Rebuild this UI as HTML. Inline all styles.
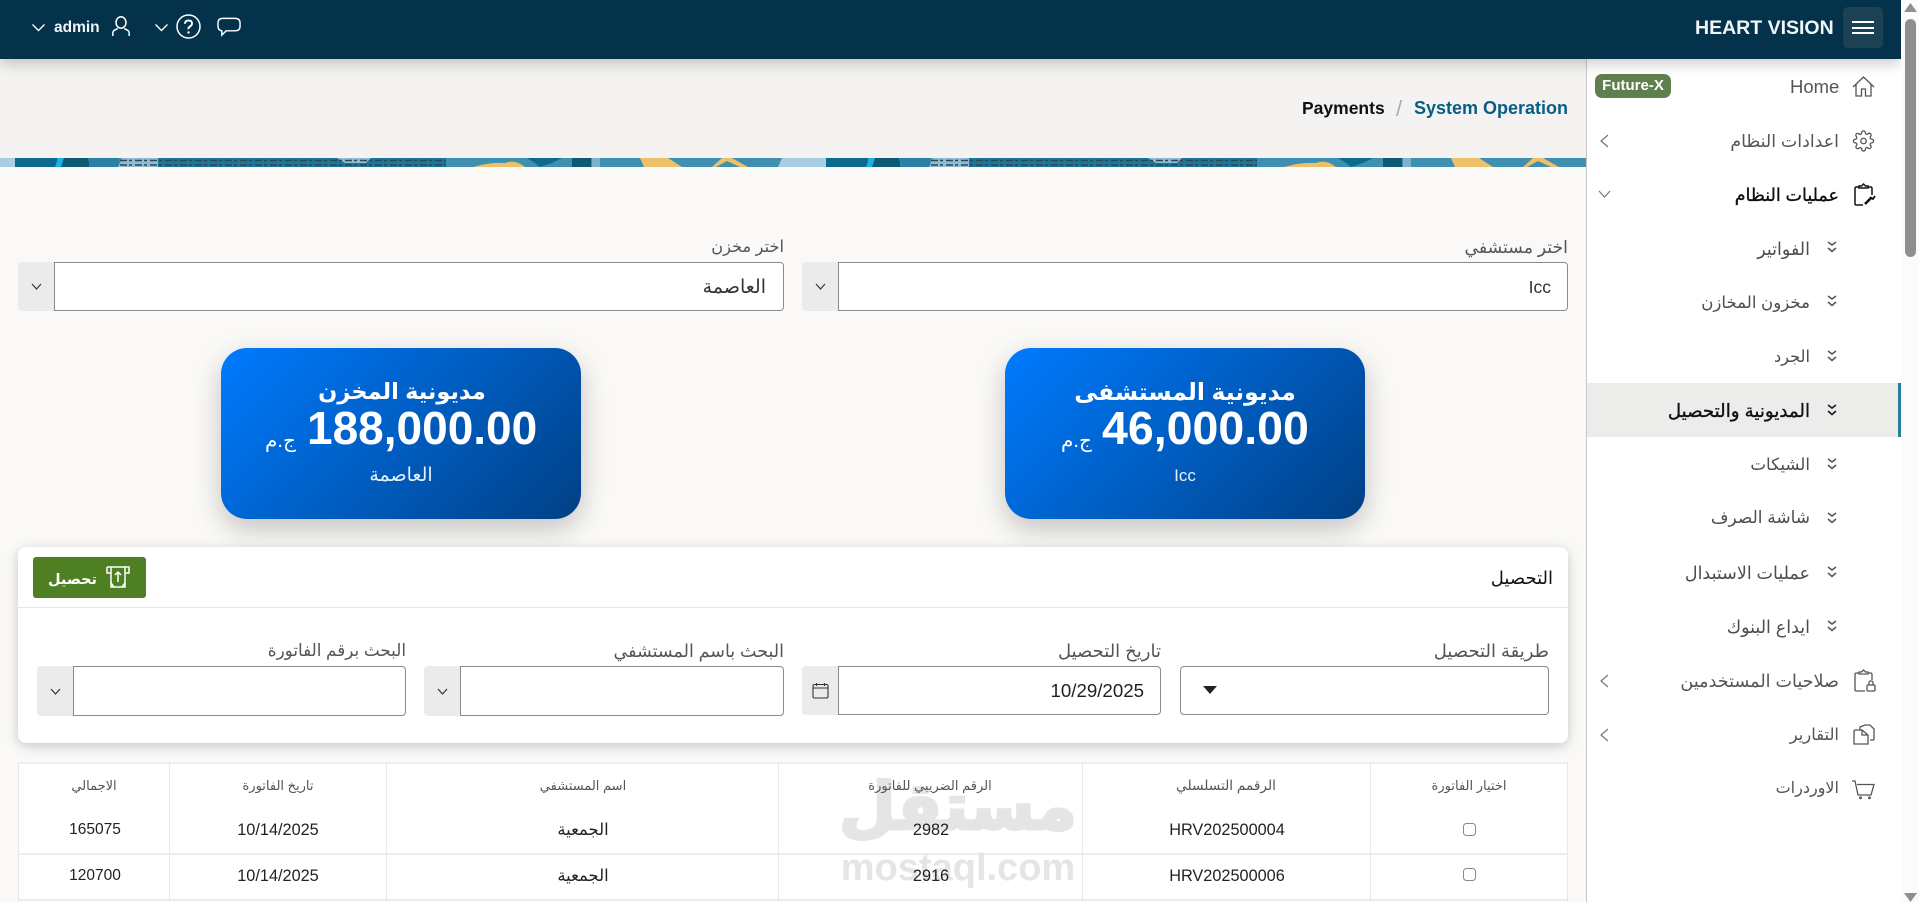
<!DOCTYPE html>
<html lang="ar"><head><meta charset="utf-8"><title>Heart Vision</title>
<style>
html,body{margin:0;padding:0;width:1919px;height:902px;overflow:hidden;background:#faf9f7;font-family:"Liberation Sans","DejaVu Sans",sans-serif;color:#222}
.a{position:absolute;box-sizing:border-box}
.t{position:absolute;white-space:nowrap;line-height:28px;height:28px}
.r{text-align:right}
.c{text-align:center;transform:translateX(-50%)}
.m{color:#555;font-size:17px}
.mi{color:#4d4d4d;font-size:17px}
.in{position:absolute;box-sizing:border-box;background:#fff;border:1px solid #8a8a8a;border-radius:0 4px 4px 0}
.ad{position:absolute;box-sizing:border-box;background:#ebebeb;border-radius:4px 0 0 4px}
.lab{color:#555;font-size:17px}
.vl{position:absolute;width:1px;background:#e8e8e8;top:762px;height:140px}
.hl{position:absolute;height:2px;background:#ececec;left:18px;width:1550px}
.th{color:#555;font-size:13px;top:772px}
.td{color:#222;font-size:16.3px}
.cb{position:absolute;box-sizing:border-box;width:13px;height:13px;border:1.5px solid #888;border-radius:3.5px;background:#fff}
.s{-webkit-text-stroke:.35px currentColor}
svg{position:absolute;overflow:visible}
</style></head><body>

<!-- top band -->
<div class="a" style="left:0;top:59px;width:1586px;height:99px;background:#f4f3f1"></div>
<!-- strip -->
<svg style="left:0;top:158px" width="1586" height="9" viewBox="0 0 1586 9">
<defs><pattern id="p" width="811" height="9" patternUnits="userSpaceOnUse">
<rect width="811" height="9" fill="#3f90b0"/>
<rect x="0" width="16" height="9" fill="#a9cde2"/>
<rect x="15" width="42" height="9" fill="#0c6a8f"/>
<polygon points="58,0 64,0 61,9 55,9" fill="#1cb0ea"/>
<polygon points="64,0 88,0 90,9 61,9" fill="#0e5a75"/>
<rect x="89" width="30" height="9" fill="#2b80a6"/>
<polygon points="122,0 160,0 160,9 118,9" fill="#8fbcd4"/>
<rect x="158" width="288" height="9" fill="#1e7598"/>
<polygon points="337,0 371,0 366,5 345,5" fill="#8fbcd4"/>
<path d="M120 2.500H446M120 7H446" stroke="#2a4a58" stroke-width="1.500" stroke-dasharray="7 2 3 3" fill="none"/>
<path d="M473 9 Q490 4 505 5 Q515 1 525 9Z" fill="#efc06a"/>
<polygon points="527,0 562,0 552,5 540,9 535,5" fill="#0c6a8f"/>
<rect x="572" width="19" height="9" fill="#0e5a75"/>
<rect x="592" width="8" height="9" fill="#7fb2c9"/>
<polygon points="640,0 668,0 682,9 644,9" fill="#efc06a"/>
<polygon points="722,0 732,0 748,9 740,9 727,3 716,9 712,9" fill="#efc06a"/>
<polygon points="782,0 811,0 811,9 778,9" fill="#a9cde2"/>
</pattern></defs>
<rect width="1586" height="9" fill="url(#p)"/>
</svg>

<!-- breadcrumb -->
<div class="t" style="left:1302px;top:94px;font-size:17.5px;font-weight:700;color:#111">Payments</div>
<div class="t" style="left:1396px;top:95px;font-size:22px;color:#aaa">/</div>
<div class="t" style="left:1414px;top:94px;font-size:18px;font-weight:700;color:#075d85">System Operation</div>

<!-- selects -->
<div class="t r lab" dir="rtl" style="right:1135px;top:233px;font-size:16.2px">اختر مخزن</div>
<div class="ad" style="left:18px;top:262px;width:37px;height:49px"></div>
<div class="in" style="left:54px;top:262px;width:730px;height:49px"></div>
<svg style="left:31px;top:283px" width="11" height="7" viewBox="0 0 11 7"><path d="M1 1l4.500 5L10 1" fill="none" stroke="#333" stroke-width="1.200"/></svg>
<div class="t r" dir="rtl" style="right:1153px;top:274px;font-size:19px;color:#333">العاصمة</div>

<div class="t r lab" dir="rtl" style="right:351px;top:233px;font-size:17.3px">اختر مستشفي</div>
<div class="ad" style="left:802px;top:262px;width:37px;height:49px"></div>
<div class="in" style="left:838px;top:262px;width:730px;height:49px"></div>
<svg style="left:815px;top:283px" width="11" height="7" viewBox="0 0 11 7"><path d="M1 1l4.500 5L10 1" fill="none" stroke="#333" stroke-width="1.200"/></svg>
<div class="t r" style="right:368px;top:273px;font-size:17.500px;color:#333">Icc</div>

<!-- debt cards -->
<div class="a" style="left:221px;top:348px;width:360px;height:171px;border-radius:26px;background:linear-gradient(135deg,#007bff,#004085);box-shadow:0 10px 28px rgba(0,0,0,.22)"></div>
<div class="t c" dir="rtl" style="left:402px;top:378px;font-size:22.500px;font-weight:700;color:#fff">مديونية المخزن</div>
<div class="t" style="left:307px;top:414px;font-size:46px;font-weight:700;color:#fff">188,000.00</div>
<div class="t" dir="rtl" style="left:265px;top:427px;font-size:20px;color:#fff">ج.م</div>
<div class="t c" dir="rtl" style="left:401px;top:462px;font-size:19px;color:#e6f0fb">العاصمة</div>

<div class="a" style="left:1005px;top:348px;width:360px;height:171px;border-radius:26px;background:linear-gradient(135deg,#007bff,#004085);box-shadow:0 10px 28px rgba(0,0,0,.22)"></div>
<div class="t c" dir="rtl" style="left:1185px;top:378px;font-size:23.500px;font-weight:700;color:#fff">مديونية المستشفى</div>
<div class="t" style="left:1102px;top:414px;font-size:46.500px;font-weight:700;color:#fff">46,000.00</div>
<div class="t" dir="rtl" style="left:1061px;top:427px;font-size:20px;color:#fff">ج.م</div>
<div class="t c" style="left:1185px;top:462px;font-size:17px;color:#e6f0fb">Icc</div>

<!-- panel -->
<div class="a" style="left:18px;top:547px;width:1550px;height:196px;background:#fff;border-radius:8px;box-shadow:0 3px 12px rgba(0,0,0,.2)"></div>
<div class="a" style="left:18px;top:607px;width:1550px;height:1px;background:#e6e6e6"></div>
<div class="a" style="left:33px;top:557px;width:113px;height:41px;background:#4f7f23;border-radius:3px"></div>
<svg style="left:106px;top:566px" width="24" height="22" viewBox="0 0 24 22" fill="none" stroke="#fff" stroke-width="1.500"><path d="M1 1h22v6h-4M1 1v6h4M5 1v20h14V1"/><path d="M12 16V6M9 9l3-3 3 3"/><path d="M5 17l3 4M19 17l-3 4"/></svg>
<div class="t r" dir="rtl" style="right:1822px;top:566px;font-size:14.500px;font-weight:700;color:#fff">تحصيل</div>
<div class="t r" dir="rtl" style="right:366px;top:564px;font-size:18px;color:#111">التحصيل</div>

<div class="t r lab" dir="rtl" style="right:370px;top:637px;font-size:18px">طريقة التحصيل</div>
<div class="a" style="left:1180px;top:666px;width:369px;height:49px;background:#fff;border:1px solid #8a8a8a;border-radius:4px"></div>
<svg style="left:1203px;top:686px" width="14" height="8" viewBox="0 0 14 8"><path d="M0 0h14L7 8z" fill="#222"/></svg>

<div class="t r lab" dir="rtl" style="right:758px;top:637px;font-size:18px">تاريخ التحصيل</div>
<div class="ad" style="left:802px;top:666px;width:37px;height:49px"></div>
<div class="in" style="left:838px;top:666px;width:323px;height:49px"></div>
<svg style="left:812px;top:682px" width="17" height="17" viewBox="0 0 17 17" fill="none" stroke="#333" stroke-width="1.100"><rect x="1" y="2.500" width="15" height="13.500" rx="1.500"/><path d="M1 6h15M4.500 1v3M12.500 1v3"/></svg>
<div class="t" style="right:775px;top:677px;font-size:18.700px;color:#222">10/29/2025</div>

<div class="t r lab" dir="rtl" style="right:1135px;top:637px;font-size:17.500px">البحث باسم المستشفي</div>
<div class="ad" style="left:424px;top:666px;width:37px;height:50px"></div>
<div class="in" style="left:460px;top:666px;width:324px;height:50px"></div>
<svg style="left:437px;top:688px" width="11" height="7" viewBox="0 0 11 7"><path d="M1 1l4.500 5L10 1" fill="none" stroke="#333" stroke-width="1.200"/></svg>

<div class="t r lab" dir="rtl" style="right:1513px;top:637px;font-size:16.800px">البحث برقم الفاتورة</div>
<div class="ad" style="left:37px;top:666px;width:37px;height:50px"></div>
<div class="in" style="left:73px;top:666px;width:333px;height:50px"></div>
<svg style="left:50px;top:688px" width="11" height="7" viewBox="0 0 11 7"><path d="M1 1l4.500 5L10 1" fill="none" stroke="#333" stroke-width="1.200"/></svg>

<!-- table -->
<div class="a" style="left:18px;top:762px;width:1550px;height:140px;background:#fff;border-top:2px solid #eee"></div>
<div class="vl" style="left:18px"></div><div class="vl" style="left:169px"></div><div class="vl" style="left:386px"></div><div class="vl" style="left:778px"></div><div class="vl" style="left:1082px"></div><div class="vl" style="left:1370px"></div><div class="vl" style="left:1567px"></div>
<div class="hl" style="top:853px"></div><div class="hl" style="top:899px"></div>

<!-- watermark -->
<div class="t c" dir="rtl" style="left:958px;top:772px;height:70px;line-height:70px;font-size:65px;font-weight:700;color:#e5e5e5;-webkit-text-stroke:3px #e5e5e5">مستقل</div>
<div class="t c" style="left:958px;top:853px;height:30px;line-height:30px;font-size:38px;font-weight:700;color:#e5e5e5">mostaql.com</div>

<div class="t c th" dir="rtl" style="left:94px">الاجمالي</div>
<div class="t c th" dir="rtl" style="left:278px">تاريخ الفاتورة</div>
<div class="t c th" dir="rtl" style="left:583px">اسم المستشفي</div>
<div class="t c th" dir="rtl" style="left:930px">الرقم الضريبي للفاتورة</div>
<div class="t c th" dir="rtl" style="left:1226px;font-size:13.700px">الرقمم التسلسلي</div>
<div class="t c th" dir="rtl" style="left:1469px">اختيار الفاتورة</div>

<div class="t c td" style="left:95px;top:816px;font-size:15.500px">165075</div>
<div class="t c td" style="left:278px;top:816px">10/14/2025</div>
<div class="t c td" dir="rtl" style="left:583px;top:816px;font-size:16.400px">الجمعية</div>
<div class="t c td" style="left:931px;top:816px">2982</div>
<div class="t c td" style="left:1227px;top:816px">HRV202500004</div>
<div class="cb" style="left:1463px;top:823px"></div>

<div class="t c td" style="left:95px;top:862px;font-size:15.500px">120700</div>
<div class="t c td" style="left:278px;top:862px">10/14/2025</div>
<div class="t c td" dir="rtl" style="left:583px;top:862px;font-size:16.400px">الجمعية</div>
<div class="t c td" style="left:931px;top:862px">2916</div>
<div class="t c td" style="left:1227px;top:862px">HRV202500006</div>
<div class="cb" style="left:1463px;top:868px"></div>

<!-- sidebar -->
<div class="a" style="left:1586px;top:59px;width:315px;height:843px;background:#fff;border-left:1px solid #c8c8c8"></div>
<div class="a" style="left:1587px;top:383px;width:314px;height:54px;background:#ececeb;border-right:3px solid #2a7f9e"></div>

<div class="t" style="left:1790px;top:73px;font-size:18.500px;color:#555">Home</div>
<div class="a" style="left:1595px;top:74px;width:76px;height:24px;background:#5f7f4e;border-radius:7px;color:#fff;font-weight:700;font-size:15px;line-height:24px;text-align:center">Future-X</div>

<div class="t r m" dir="rtl" style="right:80px;top:127px;font-size:17.400px">اعدادات النظام</div>
<div class="t r m s" dir="rtl" style="right:80px;top:181px;color:#111;font-size:17.500px">عمليات النظام</div>
<div class="t r mi" dir="rtl" style="right:109px;top:235px;font-size:17.500px">الفواتير</div>
<div class="t r mi" dir="rtl" style="right:109px;top:289px;font-size:16.600px">مخزون المخازن</div>
<div class="t r mi" dir="rtl" style="right:109px;top:343px;font-size:16.200px">الجرد</div>
<div class="t r mi s" dir="rtl" style="right:109px;top:397px;color:#111;font-size:18.200px">المديونية والتحصيل</div>
<div class="t r mi" dir="rtl" style="right:109px;top:451px;font-size:16.700px">الشيكات</div>
<div class="t r mi" dir="rtl" style="right:109px;top:504px;font-size:17px">شاشة الصرف</div>
<div class="t r mi" dir="rtl" style="right:109px;top:559px;font-size:17.500px">عمليات الاستبدال</div>
<div class="t r mi" dir="rtl" style="right:109px;top:613px;font-size:17.500px">ايداع البنوك</div>
<div class="t r m" dir="rtl" style="right:80px;top:667px;font-size:17.600px">صلاحيات المستخدمين</div>
<div class="t r m" dir="rtl" style="right:80px;top:721px;font-size:16.400px">التقارير</div>
<div class="t r m" dir="rtl" style="right:80px;top:775px;font-size:16px">الاوردرات</div>

<!-- sub chevrons -->
<svg style="left:1827px;top:241px" width="10" height="12" viewBox="0 0 10 12" fill="none" stroke="#555" stroke-width="1.500"><path d="M1 1l4 3 4-3M1 7l4 3.500 4-3.500"/></svg>
<svg style="left:1827px;top:295px" width="10" height="12" viewBox="0 0 10 12" fill="none" stroke="#555" stroke-width="1.500"><path d="M1 1l4 3 4-3M1 7l4 3.500 4-3.500"/></svg>
<svg style="left:1827px;top:350px" width="10" height="12" viewBox="0 0 10 12" fill="none" stroke="#555" stroke-width="1.500"><path d="M1 1l4 3 4-3M1 7l4 3.500 4-3.500"/></svg>
<svg style="left:1827px;top:404px" width="10" height="12" viewBox="0 0 10 12" fill="none" stroke="#222" stroke-width="1.700"><path d="M1 1l4 3 4-3M1 7l4 3.500 4-3.500"/></svg>
<svg style="left:1827px;top:458px" width="10" height="12" viewBox="0 0 10 12" fill="none" stroke="#555" stroke-width="1.500"><path d="M1 1l4 3 4-3M1 7l4 3.500 4-3.500"/></svg>
<svg style="left:1827px;top:512px" width="10" height="12" viewBox="0 0 10 12" fill="none" stroke="#555" stroke-width="1.500"><path d="M1 1l4 3 4-3M1 7l4 3.500 4-3.500"/></svg>
<svg style="left:1827px;top:566px" width="10" height="12" viewBox="0 0 10 12" fill="none" stroke="#555" stroke-width="1.500"><path d="M1 1l4 3 4-3M1 7l4 3.500 4-3.500"/></svg>
<svg style="left:1827px;top:620px" width="10" height="12" viewBox="0 0 10 12" fill="none" stroke="#555" stroke-width="1.500"><path d="M1 1l4 3 4-3M1 7l4 3.500 4-3.500"/></svg>

<!-- left chevrons -->
<svg style="left:1600px;top:134px" width="9" height="14" viewBox="0 0 9 14" fill="none" stroke="#777" stroke-width="1.200"><path d="M8 1L1 7l7 6"/></svg>
<svg style="left:1598px;top:190px" width="13" height="8" viewBox="0 0 13 8" fill="none" stroke="#777" stroke-width="1.200"><path d="M1 1l5.500 6L12 1"/></svg>
<svg style="left:1600px;top:674px" width="9" height="14" viewBox="0 0 9 14" fill="none" stroke="#777" stroke-width="1.200"><path d="M8 1L1 7l7 6"/></svg>
<svg style="left:1600px;top:728px" width="9" height="14" viewBox="0 0 9 14" fill="none" stroke="#777" stroke-width="1.200"><path d="M8 1L1 7l7 6"/></svg>

<!-- sidebar icons -->
<svg style="left:1852px;top:76px" width="23" height="21" viewBox="0 0 23 21" fill="none" stroke="#555" stroke-width="1.300"><path d="M1 11L11.500 1 22 11M4 8.500V20h5.500v-7h4v7H19V8.500"/></svg>
<svg style="left:1852px;top:130px" width="23" height="22" viewBox="0 0 24 24" fill="none" stroke="#555" stroke-width="1.400"><circle cx="12" cy="12" r="3"/><path d="M19.400 15a1.650 1.650 0 0 0 .33 1.820l.06.06a2 2 0 0 1 0 2.830 2 2 0 0 1-2.830 0l-.06-.06a1.650 1.650 0 0 0-1.820-.33 1.650 1.650 0 0 0-1 1.510V21a2 2 0 0 1-2 2 2 2 0 0 1-2-2v-.09A1.650 1.650 0 0 0 9 19.400a1.650 1.650 0 0 0-1.820.33l-.06.06a2 2 0 0 1-2.830 0 2 2 0 0 1 0-2.830l.06-.06a1.650 1.650 0 0 0 .33-1.820 1.650 1.650 0 0 0-1.510-1H3a2 2 0 0 1-2-2 2 2 0 0 1 2-2h.09A1.650 1.650 0 0 0 4.600 9a1.650 1.650 0 0 0-.33-1.820l-.06-.06a2 2 0 0 1 0-2.830 2 2 0 0 1 2.830 0l.06.06a1.650 1.650 0 0 0 1.820.33H9a1.650 1.650 0 0 0 1-1.510V3a2 2 0 0 1 2-2 2 2 0 0 1 2 2v.09a1.650 1.650 0 0 0 1 1.510 1.650 1.650 0 0 0 1.820-.33l.06-.06a2 2 0 0 1 2.830 0 2 2 0 0 1 0 2.830l-.06.06a1.650 1.650 0 0 0-.33 1.820V9a1.650 1.650 0 0 0 1.510 1H21a2 2 0 0 1 2 2 2 2 0 0 1-2 2h-.09a1.650 1.650 0 0 0-1.510 1z"/></svg>
<svg style="left:1854px;top:183px" width="22" height="23" viewBox="0 0 22 23" fill="none" stroke="#111" stroke-width="1.500"><path d="M5 4H2.500Q1 4 1 5.500v15.500q0 1 1.500 1H9M14 4h2.500q1.500 0 1.500 1.500V12"/><path d="M5 5h9V3h-2.500L9.500 1 7.500 3H5z"/><path d="M11 21l6-6" stroke-width="2.600"/><path d="M16 14l3 2 2-3" stroke-width="1.800"/></svg>
<svg style="left:1854px;top:669px" width="22" height="23" viewBox="0 0 22 23" fill="none" stroke="#555" stroke-width="1.300"><path d="M5 4H2.500Q1 4 1 5.500v15.500q0 1 1.500 1H11M14 4h2.500q1.500 0 1.500 1.500V11"/><path d="M5 5h9V3h-2.500L9.500 1 7.500 3H5z"/><rect x="13" y="16" width="8" height="6" rx="1"/><path d="M15 16v-2q0-2 2-2t2 2v2"/></svg>
<svg style="left:1853px;top:724px" width="22" height="21" viewBox="0 0 22 21" fill="none" stroke="#555" stroke-width="1.300"><path d="M7 6V3h0L12 1h5l4 4v10q0 1-1 1h-3"/><path d="M1 7.500Q1 6 2.500 6H9l6 5v9H1z"/><path d="M9 6v5h6"/></svg>
<svg style="left:1852px;top:780px" width="23" height="19" viewBox="0 0 23 19" fill="none" stroke="#555" stroke-width="1.300"><path d="M0 1h3l3 14h13l3-10.500H5"/><circle cx="8.500" cy="17.800" r=".8"/><circle cx="17.500" cy="17.800" r=".8"/></svg>

<!-- header -->
<div class="a" style="left:0;top:0;width:1901px;height:59px;background:#03324a;box-shadow:0 4px 14px rgba(0,0,0,.22)"></div>
<svg style="left:32px;top:24px" width="13" height="8" viewBox="0 0 13 8" fill="none" stroke="#fff" stroke-width="1.400"><path d="M.5.500l6 6 6-6"/></svg>
<div class="t" style="left:54px;top:14px;font-size:15.500px;font-weight:700;color:#f4f6f8">admin</div>
<svg style="left:112px;top:16px" width="18" height="20" viewBox="0 0 18 20" fill="none" stroke="#fff" stroke-width="1.500"><ellipse cx="9" cy="6.500" rx="5" ry="5.700"/><path d="M.8 20v-2.500q0-3 3-4l2-1M17.200 20v-2.500q0-3-3-4l-2-1"/></svg>
<svg style="left:155px;top:24px" width="13" height="8" viewBox="0 0 13 8" fill="none" stroke="#fff" stroke-width="1.400"><path d="M.5.500l6 6 6-6"/></svg>
<svg style="left:176px;top:14px" width="25" height="25" viewBox="0 0 25 25" fill="none" stroke="#fff" stroke-width="1.500"><circle cx="12.500" cy="12.500" r="11.500"/><path d="M9 9.800q0-3.300 3.500-3.300t3.500 3q0 1.800-2 3t-1.500 2.700" stroke-width="1.900"/><circle cx="12.500" cy="18.500" r="1.200" fill="#fff" stroke="none"/></svg>
<svg style="left:217px;top:17px" width="24" height="20" viewBox="0 0 25 20" fill="none" stroke="#fff" stroke-width="1.500"><path d="M6 1h13q5 0 5 5v3q0 5-5 5H9.500L5 18.500V14q-4-.5-4-5V6q0-5 5-5z"/></svg>

<div class="t" style="left:1695px;top:14px;font-size:19.500px;font-weight:700;color:#f2f5f7">HEART VISION</div>
<div class="a" style="left:1843px;top:7px;width:40px;height:41px;background:#1c4154;border-radius:5px"></div>
<div class="a" style="left:1852px;top:21px;width:22px;height:2px;background:#fff"></div>
<div class="a" style="left:1852px;top:27px;width:22px;height:2px;background:#fff"></div>
<div class="a" style="left:1852px;top:32px;width:22px;height:2px;background:#fff"></div>

<!-- scrollbar -->
<div class="a" style="left:1901px;top:0;width:18px;height:902px;background:#fbfbfb"></div>
<div class="a" style="left:1905px;top:19px;width:11px;height:238px;background:#8f8f8f;border-radius:6px"></div>
<svg style="left:1904px;top:3px" width="13" height="9" viewBox="0 0 13 9"><path d="M6.500 0L13 9H0z" fill="#8f8f8f"/></svg>
<svg style="left:1904px;top:893px" width="13" height="9" viewBox="0 0 13 9"><path d="M0 0h13L6.500 9z" fill="#8f8f8f"/></svg>
</body></html>
